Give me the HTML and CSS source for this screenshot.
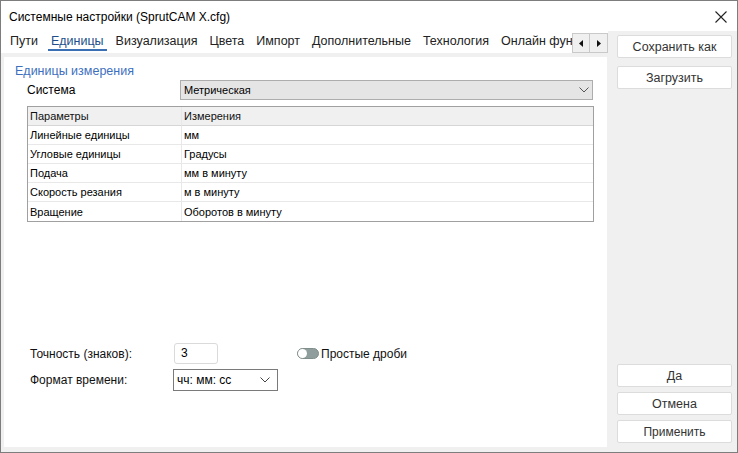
FILE: index.html
```html
<!DOCTYPE html>
<html lang="ru">
<head>
<meta charset="utf-8">
<title>Системные настройки</title>
<link rel="stylesheet" href="styles.css">
</head>
<body>
<div class="window">
  <div class="titlebar">
    <span class="title">Системные настройки (SprutCAM X.cfg)</span>
    <svg class="close" width="12" height="12" viewBox="0 0 12 12"><path d="M0.5 0.5 L11.5 11.5 M11.5 0.5 L0.5 11.5" stroke="#222" stroke-width="1.1" fill="none"/></svg>
  </div>
  <div class="body">
    <div class="main">
      <div class="tabs">
        <div class="tablist">
          <span class="tab">Пути</span>
          <span class="tab active">Единицы</span>
          <span class="tab">Визуализация</span>
          <span class="tab">Цвета</span>
          <span class="tab">Импорт</span>
          <span class="tab">Дополнительные</span>
          <span class="tab">Технология</span>
          <span class="tab">Онлайн функ</span>
        </div>
        <div class="tabscroll">
          <span class="arrowbtn"><svg width="4" height="7" viewBox="0 0 4 7"><path d="M4 0 L0 3.5 L4 7 Z" fill="#111"/></svg></span>
          <span class="arrowbtn"><svg width="4" height="7" viewBox="0 0 4 7"><path d="M0 0 L4 3.5 L0 7 Z" fill="#111"/></svg></span>
        </div>
      </div>
      <div class="panel">
        <div class="group-title">Единицы измерения</div>
        <div class="system-row">
          <span class="system-label">Система</span>
          <div class="combo">
            <span>Метрическая</span>
            <svg class="chev" width="10" height="6" viewBox="0 0 10 6"><path d="M0.5 0.5 L5 5 L9.5 0.5" stroke="#555" stroke-width="1" fill="none"/></svg>
          </div>
        </div>
        <table class="grid">
          <tr class="head"><td>Параметры</td><td>Измерения</td></tr>
          <tr><td>Линейные единицы</td><td>мм</td></tr>
          <tr><td>Угловые единицы</td><td>Градусы</td></tr>
          <tr><td>Подача</td><td>мм в минуту</td></tr>
          <tr><td>Скорость резания</td><td>м в минуту</td></tr>
          <tr class="last"><td>Вращение</td><td>Оборотов в минуту</td></tr>
        </table>
        <div class="form">
          <div class="form-row first">
            <span class="flabel">Точность (знаков):</span>
            <div class="numbox">3</div>
            <span class="toggle"><span class="knob"></span></span>
            <span class="toggle-label">Простые дроби</span>
          </div>
          <div class="form-row second">
            <span class="flabel">Формат времени:</span>
            <div class="timebox">
              <span>чч: мм: сс</span>
              <svg class="chev" width="10" height="6" viewBox="0 0 10 6"><path d="M0.5 0.5 L5 5 L9.5 0.5" stroke="#444" stroke-width="1" fill="none"/></svg>
            </div>
          </div>
        </div>
      </div>
    </div>
    <div class="side">
      <div class="btn">Сохранить как</div>
      <div class="btn">Загрузить</div>
      <div class="side-fill"></div>
      <div class="btn">Да</div>
      <div class="btn">Отмена</div>
      <div class="btn small">Применить</div>
    </div>
  </div>
</div>
</body>
</html>
```
FILE: styles.css
```css
* { box-sizing: border-box; }
html, body { margin: 0; padding: 0; }
body {
  width: 738px;
  height: 453px;
  background: #fff;
  font-family: "Liberation Sans", Arial, sans-serif;
  color: #000;
}
.window {
  width: 738px;
  height: 453px;
  border: 1px solid #7d7d7d;
  display: flex;
  flex-direction: column;
  background: #f0f0f0;
}
.titlebar {
  height: 30px;
  background: #fff;
  display: flex;
  align-items: center;
  justify-content: space-between;
  padding: 0 10px 0 8px;
}
.title {
  font-size: 12px;
  color: #000;
  padding-top: 1px;
}
.close { margin-top: 1px; }
.body {
  flex: 1;
  display: flex;
}
.main {
  width: 607px;
  display: flex;
  flex-direction: column;
}
.tabs {
  height: 22px;
  background: #fff;
  display: flex;
  align-items: stretch;
  padding-left: 9px;
}
.tablist {
  width: 562px;
  overflow: hidden;
  white-space: nowrap;
  display: flex;
  gap: 12px;
  font-size: 12.5px;
  color: #222;
}
.tab {
  position: relative;
  line-height: 20px;
  flex: none;
}
.tab.active {
  color: #1e4f8c;
  margin-left: 1px;
}
.tab.active::after {
  content: "";
  position: absolute;
  left: -3px;
  right: -3px;
  top: 18px;
  height: 2px;
  background: #3a6fb4;
}
.tabscroll {
  display: flex;
  margin-top: 2px;
  height: 20px;
}
.arrowbtn {
  width: 18px;
  height: 20px;
  background: #f0f0f0;
  border: 1px solid #c9c9c9;
  display: flex;
  align-items: center;
  justify-content: center;
}
.arrowbtn + .arrowbtn { border-left: none; }
.panel {
  margin: 4px 1px 5px 3px;
  flex: 1;
  background: #fff;
  display: flex;
  flex-direction: column;
  padding: 6px 0 56px 0;
}
.group-title {
  font-size: 12.5px;
  line-height: 16px;
  color: #3d6fbf;
  padding-left: 11px;
}
.system-row {
  margin-top: 1px;
  height: 20px;
  display: flex;
  align-items: center;
}
.system-label {
  font-size: 12px;
  padding-left: 23px;
  width: 176px;
}
.combo {
  width: 413px;
  height: 20px;
  background: #e5e5e5;
  border: 1px solid #adadad;
  display: flex;
  align-items: center;
  justify-content: space-between;
  padding: 0 3px 0 3px;
  font-size: 11px;
}
.grid {
  margin: 6px 0 0 23px;
  width: 567px;
  border-collapse: separate;
  border-spacing: 0;
  border: 1px solid #a0a0a0;
  font-size: 11px;
  table-layout: fixed;
}
.grid td {
  height: 19px;
  padding: 0 0 0 2px;
  border-bottom: 1px solid #e8e8e8;
  white-space: nowrap;
  vertical-align: middle;
}
.grid td:first-child {
  width: 154px;
  border-right: 1px solid #e8e8e8;
}
.grid .head td {
  background: #f0f0f0;
  border-bottom-color: #d6d6d6;
  color: #111;
}
.grid .last td { border-bottom: none; }
.form {
  margin-top: auto;
  padding-left: 26px;
  font-size: 12px;
}
.form-row {
  display: flex;
  align-items: center;
}
.form-row.first { height: 21px; }
.form-row.second { height: 22px; margin-top: 5px; }
.flabel { color: #111; }
.first .flabel { width: 144px; }
.second .flabel { width: 143px; }
.numbox {
  width: 44px;
  height: 21px;
  border: 1px solid #dadada;
  border-radius: 3px;
  padding: 0 6px;
  line-height: 19px;
  font-size: 12px;
}
.toggle {
  margin-left: 79px;
  width: 22px;
  height: 11px;
  border-radius: 6px;
  background: #8f9e9c;
  border: 1px solid #7f8d8b;
  position: relative;
}
.knob {
  position: absolute;
  left: 0;
  top: 0;
  width: 9px;
  height: 9px;
  border-radius: 50%;
  background: #fff;
}
.toggle-label {
  margin-left: 2px;
  font-size: 12px;
  color: #111;
}
.timebox {
  width: 105px;
  height: 22px;
  border: 1px solid #7a7a7a;
  display: flex;
  align-items: center;
  justify-content: space-between;
  padding: 0 7px 0 3px;
  font-size: 12px;
}
.side {
  flex: 1;
  display: flex;
  flex-direction: column;
  gap: 8px;
  padding: 4px 5px 9px 9px;
}
.side-fill { flex: 1; margin: -8px 0; }
.btn {
  height: 23px;
  background: #fff;
  border: 1px solid #dcdcdc;
  border-radius: 2px;
  display: flex;
  align-items: center;
  justify-content: center;
  font-size: 12.5px;
  color: #333;
}
.btn.small { font-size: 12px; }
.side .btn:nth-child(5), .side .btn:nth-child(6) { margin-top: -3px; }
```
